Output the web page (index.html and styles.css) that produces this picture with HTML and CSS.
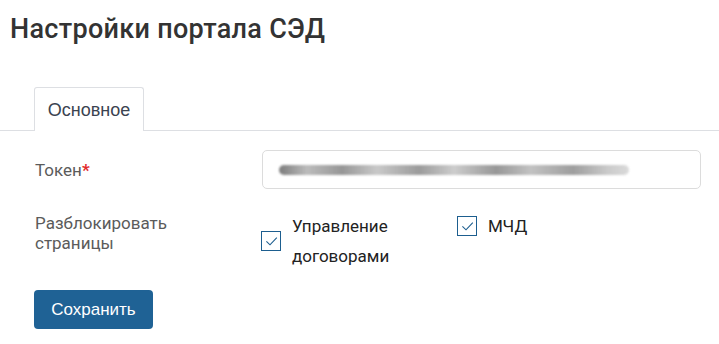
FILE: index.html
```html
<!DOCTYPE html>
<html lang="ru">
<head>
<meta charset="utf-8">
<link rel="stylesheet" href="styles.css">
</head>
<body>
<h1 class="title">Настройки портала СЭД</h1>
<div class="tabs">
  <div class="tab">Основное</div>
</div>
<form class="form">
  <div class="row row-token">
    <label class="label">Токен<span class="req">*</span></label>
    <div class="input"><span class="blur"></span></div>
  </div>
  <div class="row row-pages">
    <div class="label label-multi">Разблокировать<br>страницы</div>
    <div class="checks">
      <label class="check check-center"><span class="box"><svg viewBox="0 0 17 17" width="17" height="17"><path d="M3.4 8.4 L7 11.8 L13.8 4.6" fill="none" stroke="#1d5e8f" stroke-width="1.1"/></svg></span><span class="ctext">Управление<br>договорами</span></label>
      <label class="check"><span class="box"><svg viewBox="0 0 17 17" width="17" height="17"><path d="M3.4 8.4 L7 11.8 L13.8 4.6" fill="none" stroke="#1d5e8f" stroke-width="1.1"/></svg></span><span class="ctext">МЧД</span></label>
    </div>
  </div>
  <div class="actions">
    <button type="button" class="btn">Сохранить</button>
  </div>
</form>
</body>
</html>
```
FILE: styles.css
```css
* { box-sizing: border-box; }
body {
  margin: 0;
  background: #fff;
  font-family: Roboto, "Liberation Sans", Arial, sans-serif;
  color: #333;
}
.title {
  margin: 0;
  padding: 12px 0 0 10px;
  font-size: 27px;
  line-height: 34px;
  font-weight: 500;
  letter-spacing: 0.3px;
  color: #333;
}
.tabs {
  margin-top: 41px;
  border-bottom: 1px solid #dddfe3;
  padding-left: 34px;
  display: flex;
  height: 44px;
}
.tab {
  width: 110px;
  height: 44px;
  border: 1px solid #dddfe3;
  border-bottom: none;
  border-radius: 3px 3px 0 0;
  background: #fff;
  font-family: "Liberation Sans", Arial, sans-serif;
  font-size: 18px;
  color: #3b4350;
  display: flex;
  align-items: center;
  justify-content: center;
  padding-top: 1px;
}
.form {
  padding: 19px 18px 0 35px;
}
.row {
  display: grid;
  grid-template-columns: 227px 1fr;
}
.label {
  font-size: 17px;
  color: #5b5b5b;
  line-height: 20px;
}
.row-token { align-items: center; }
.req { color: #e22b2b; font-weight: 700; }
.input {
  height: 39px;
  border: 1px solid #dcdcdc;
  border-radius: 5px;
  display: flex;
  align-items: center;
  padding-left: 16px;
}
.blur {
  display: block;
  width: 350px;
  height: 10px;
  border-radius: 5px;
  background: linear-gradient(90deg, #666, #b0b0b0 8%, #858585 18%, #c0c0c0 28%, #8a8a8a 40%, #c4c4c4 50%, #868686 62%, #b8b8b8 72%, #8e8e8e 84%, #c2c2c2 94%, #d4d4d4);
  filter: blur(1.2px);
  opacity: 0.85;
}
.row-pages { margin-top: 22px; }
.label-multi { padding-top: 2px; }
.checks {
  display: grid;
  grid-template-columns: 196px auto;
  justify-content: start;
  margin-left: -1px;
}
.check {
  display: flex;
  align-items: flex-start;
  gap: 11px;
  font-size: 17px;
  color: #222;
  line-height: 30px;
}
.check-center { align-items: center; }
.check .box {
  width: 20px;
  height: 20px;
  border: 1.5px solid #1d5e8f;
  display: flex;
  align-items: center;
  justify-content: center;
  flex: none;
}
.check:not(.check-center) .box { margin-top: 5px; }
.actions { margin-top: 19px; margin-left: -1px; }
.btn {
  width: 119px;
  height: 39px;
  border: none;
  border-radius: 4px;
  background: #1f6295;
  color: #fff;
  font-family: "Liberation Sans", Arial, sans-serif;
  font-size: 17px;
  cursor: pointer;
}
```
